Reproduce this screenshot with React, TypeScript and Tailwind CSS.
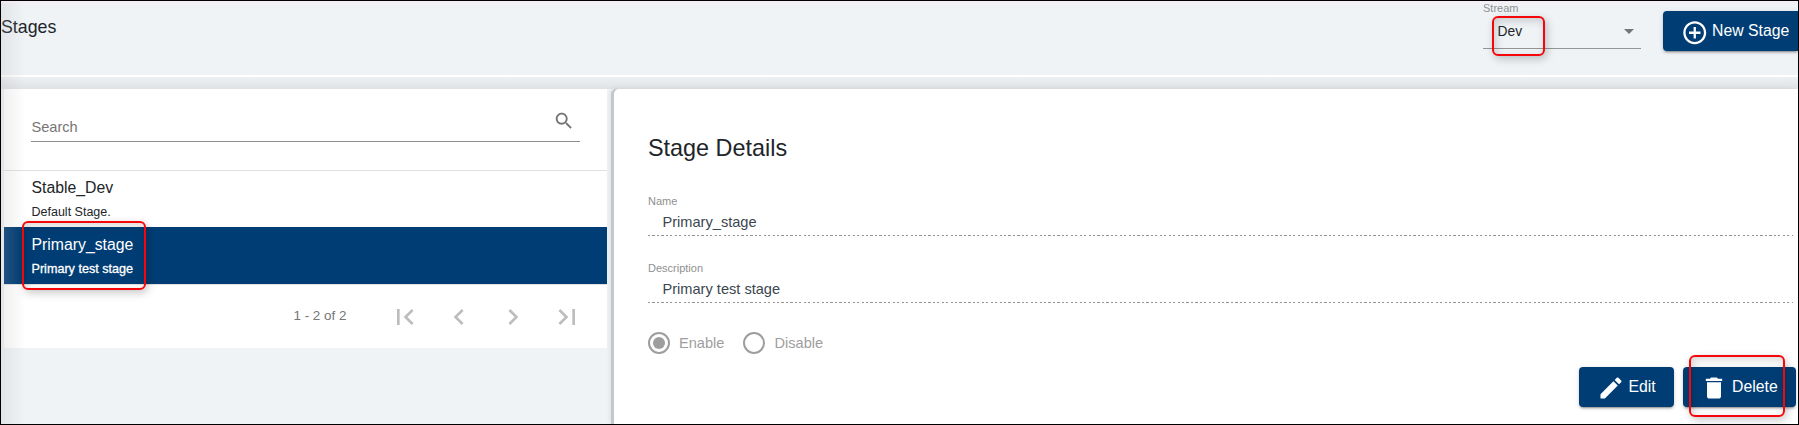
import type { ReactNode } from "react";

const paths = {
  search:
    "M15.5 14h-.79l-.28-.27C15.41 12.59 16 11.11 16 9.5 16 5.91 13.09 3 9.5 3S3 5.91 3 9.5 5.91 16 9.5 16c1.61 0 3.09-.59 4.23-1.57l.27.28v.79l5 4.99L20.49 19l-4.99-5zm-6 0C7.01 14 5 11.99 5 9.5S7.01 5 9.5 5 14 7.01 14 9.5 11.99 14 9.5 14z",
  add: "M13 7h-2v4H7v2h4v4h2v-4h4v-2h-4V7zm-1-5C6.48 2 2 6.48 2 12s4.48 10 10 10 10-4.48 10-10S17.52 2 12 2zm0 18c-4.41 0-8-3.59-8-8s3.59-8 8-8 8 3.59 8 8-3.59 8-8 8z",
  edit: "M3 17.25V21h3.75L17.81 9.94l-3.75-3.75L3 17.25zM20.71 7.04c.39-.39.39-1.02 0-1.41l-2.34-2.34c-.39-.39-1.02-.39-1.41 0l-1.83 1.83 3.75 3.75 1.83-1.83z",
  trash: "M6 19c0 1.1.9 2 2 2h8c1.1 0 2-.9 2-2V7H6v12zM19 4h-3.5l-1-1h-5l-1 1H5v2h14V4z",
  first: "M18.41 16.59L13.82 12l4.59-4.59L17 6l-6 6 6 6zM6 6h2v12H6z",
  prev: "M15.41 7.41L14 6l-6 6 6 6 1.41-1.41L10.83 12z",
  next: "M10 6L8.59 7.41 13.17 12l-4.58 4.59L10 18l6-6z",
  last: "M5.59 7.41L10.18 12l-4.59 4.59L7 18l6-6-6-6zM16 6h2v12h-2z",
};

function Icon({ name, className }: { name: keyof typeof paths; className: string }) {
  return (
    <svg viewBox="0 0 24 24" fill="currentColor" className={`block shrink-0 ${className}`}>
      <path d={paths[name]} />
    </svg>
  );
}

function Button({ className, children }: { className: string; children: ReactNode }) {
  return (
    <button
      className={`flex h-10 shrink-0 items-center bg-[#003d74] text-[15.8px] leading-10 text-white shadow-[0_3px_1px_-2px_rgba(0,0,0,0.2),0_2px_2px_0_rgba(0,0,0,0.14),0_1px_5px_0_rgba(0,0,0,0.12)] ${className}`}
    >
      {children}
    </button>
  );
}

function Field({ label, value }: { label: string; value: string }) {
  return (
    <div className="h-[67px]">
      <div className="h-[14px] text-[11px] leading-[14px] text-[#8f8f8f]">{label}</div>
      <div className="mt-[3px] h-[22px] pl-[14.5px] text-[14.6px] leading-[22px] text-[#3b4650]">{value}</div>
      <div className="mt-[2px] h-px bg-[repeating-linear-gradient(90deg,#949494_0_2.2px,transparent_2.2px_4.45px)]" />
    </div>
  );
}

function Highlight({ className }: { className: string }) {
  return (
    <div
      className={`absolute rounded-[6px] border-2 border-[#f5060a] shadow-[2px_3px_8px_rgba(0,0,0,0.22),inset_2px_3px_8px_rgba(0,0,0,0.16)] ${className}`}
    />
  );
}

export default function App() {
  return (
    <div className="relative flex h-[425px] w-[1799px] flex-col overflow-hidden border border-black bg-[#eff3f6] font-['Liberation_Sans',Arial,sans-serif] text-[#212529]">
      <header className="flex h-[76px] shrink-0 border-b-2 border-white">
        <h1 className="pt-[14px] text-[17.8px] leading-6">Stages</h1>
        <div className="ml-auto w-[158px]">
          <div className="h-[15px] text-[11px] leading-[14px] text-[#8f8f8f]">Stream</div>
          <div className="flex h-[33px] items-center border-b border-[#949494] pr-[7px] pl-[14.5px] text-[13.8px]">
            Dev
            <svg viewBox="0 0 10 5" className="mb-px ml-auto h-[5px] w-[10px] fill-[#757575]">
              <path d="M0 0h10L5 5z" />
            </svg>
          </div>
        </div>
        <Button className="mt-[10px] ml-[22px] w-[135px] rounded-l-[4px] pl-[17.5px]">
          <Icon name="add" className="mt-[3px] mr-[4px] size-[27.5px]" />
          <span>New Stage</span>
        </Button>
      </header>
      <div className="h-3 shrink-0 bg-linear-to-b from-[#edf1f4] to-[#dfe2e5]" />
      <main className="flex h-[335px]">
        <section className="ml-[3px] h-[259px] w-[603px] bg-white">
          <div className="h-[81px] px-[27px] pt-[19px]">
            <div className="flex h-[34px] border-b border-[#8f8f8f] text-[14.6px] text-[#757575]">
              <span className="pt-[9px] pl-[0.5px] leading-5">Search</span>
              <Icon name="search" className="mt-[2px] mr-[5px] ml-auto size-[22px]" />
            </div>
          </div>
          <div className="h-[57px] border-t border-[#e0e0e0] pl-[27.5px]">
            <div className="pt-[6px] text-[15.8px] leading-[22px]">Stable_Dev</div>
            <div className="pt-[5px] text-[12.5px] leading-4">Default Stage.</div>
          </div>
          <div className="h-[57px] bg-[#003d74] pl-[27.5px] text-white">
            <div className="pt-[7px] text-[15.8px] leading-[22px]">Primary_stage</div>
            <div className="pt-[5px] text-[12.6px] leading-4 [-webkit-text-stroke:0.3px_white]">Primary test stage</div>
          </div>
          <div className="flex h-[64px] border-t border-[#e0e0e0] pl-[289.5px] text-[#bdbdbd]">
            <span className="w-[95.5px] pt-[21px] text-[13.4px] leading-5 text-[#757575]">1 - 2 of 2</span>
            <Icon name="first" className="mt-[16px] size-8" />
            <Icon name="prev" className="mt-[16px] ml-[22px] size-8" />
            <Icon name="next" className="mt-[16px] ml-[22px] size-8" />
            <Icon name="last" className="mt-[16px] ml-[22px] size-8" />
          </div>
        </section>
        <section className="ml-[7px] h-[335px] w-[1184px] rounded-tl-[5px] bg-white pl-[34px] shadow-[-3px_0_0_#c4c7cb,-4px_0_4px_rgba(0,0,0,0.08)]">
          <h2 className="pt-[45px] text-[23.4px] leading-7">Stage Details</h2>
          <div className="mt-[32px] w-[1145px]">
            <Field label="Name" value="Primary_stage" />
            <Field label="Description" value="Primary test stage" />
          </div>
          <div className="mt-[4px] flex h-[22px] items-center text-[14.6px] text-[#9e9e9e]">
            <span className="grid size-[22px] place-items-center rounded-full border-2 border-current">
              <span className="size-3 rounded-full bg-current" />
            </span>
            <span className="mt-px ml-[9px] w-[64px]">Enable</span>
            <span className="size-[22px] rounded-full border-2 border-current" />
            <span className="mt-px ml-[9.5px]">Disable</span>
          </div>
          <div className="mt-[13px] flex justify-end pr-[2px]">
            <Button className="w-[95px] rounded-[4px] pl-[17.5px]">
              <Icon name="edit" className="mt-px mr-[4px] size-7" />
              <span>Edit</span>
            </Button>
            <Button className="ml-[9px] w-[113px] rounded-[4px] pl-[17px]">
              <Icon name="trash" className="mt-px mr-[4px] size-7" />
              <span>Delete</span>
            </Button>
          </div>
        </section>
      </main>
      <div className="pointer-events-none absolute inset-y-0 left-0 w-6 bg-linear-to-r from-[#b0a8b0]/20 to-transparent" />
      <div className="pointer-events-none absolute inset-x-0 top-0 h-1 bg-linear-to-b from-[#ffe8f4]/60 to-transparent" />
      <Highlight className="top-[15px] left-[1491px] h-[40px] w-[53px]" />
      <Highlight className="top-[220px] left-[21px] h-[69px] w-[124px]" />
      <Highlight className="top-[354px] left-[1688px] h-[62px] w-[96px]" />
    </div>
  );
}
